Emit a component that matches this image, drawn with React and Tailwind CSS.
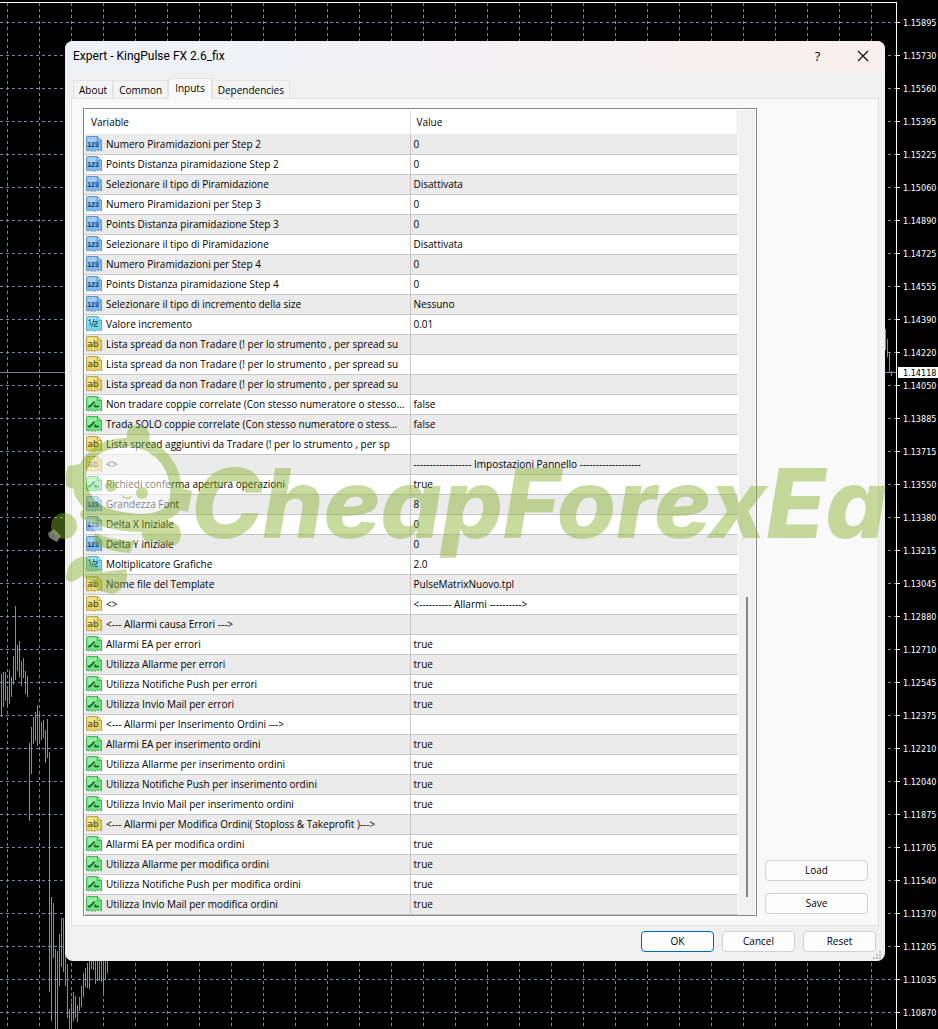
import React, { useState } from 'react';

const prices = [
  '1.15895', '1.15730', '1.15560', '1.15395', '1.15225', '1.15060', '1.14890', '1.14725',
  '1.14555', '1.14390', '1.14220', '1.14050', '1.13885', '1.13715', '1.13550', '1.13380',
  '1.13215', '1.13045', '1.12880', '1.12710', '1.12545', '1.12375', '1.12210', '1.12040',
  '1.11875', '1.11705', '1.11540', '1.11370', '1.11205', '1.11035', '1.10870',
];

// x, high, low
const bars = [
  [1, 674, 717], [3, 672, 707], [5, 672, 701], [7, 686, 706], [9, 670, 704], [11, 677, 697],
  [13, 656, 685], [15, 606, 680], [17, 645, 671], [19, 641, 677], [21, 661, 686], [23, 658, 678],
  [25, 671, 694], [27, 676, 697], [29, 743, 821], [31, 727, 774], [33, 717, 744], [35, 712, 741],
  [37, 705, 746], [39, 714, 742], [41, 722, 740], [43, 720, 738], [45, 730, 763], [47, 719, 758],
  [49, 752, 992], [51, 897, 1021], [53, 903, 958], [55, 949, 1029], [57, 951, 1029], [59, 934, 986],
  [61, 918, 967], [63, 918, 972], [65, 940, 986], [67, 964, 1018], [69, 1009, 1029], [71, 1003, 1029],
  [73, 992, 1021], [75, 996, 1018], [77, 1005, 1022], [79, 997, 1011], [81, 986, 1007], [83, 973, 997],
  [85, 968, 987], [87, 963, 988], [89, 955, 989], [91, 950, 969], [93, 950, 970], [95, 950, 984],
  [97, 950, 981], [99, 950, 981], [101, 950, 982], [103, 950, 993], [105, 950, 980], [107, 950, 973],
  [885, 329, 350], [887, 339, 357], [889, 352, 372], [891, 371, 376],
];

const rows = [
  ['int', 'Numero Piramidazioni per Step 2', '0'],
  ['int', 'Points Distanza piramidazione Step 2', '0'],
  ['int', 'Selezionare il tipo di Piramidazione', 'Disattivata'],
  ['int', 'Numero Piramidazioni per Step 3', '0'],
  ['int', 'Points Distanza piramidazione Step 3', '0'],
  ['int', 'Selezionare il tipo di Piramidazione', 'Disattivata'],
  ['int', 'Numero Piramidazioni per Step 4', '0'],
  ['int', 'Points Distanza piramidazione Step 4', '0'],
  ['int', 'Selezionare il tipo di incremento della size', 'Nessuno'],
  ['double', 'Valore incremento', '0.01'],
  ['string', 'Lista spread da non Tradare (! per lo strumento , per spread su', ''],
  ['string', 'Lista spread da non Tradare (! per lo strumento , per spread su', ''],
  ['string', 'Lista spread da non Tradare (! per lo strumento , per spread su', ''],
  ['bool', 'Non tradare coppie correlate (Con stesso numeratore o stesso...', 'false'],
  ['bool', 'Trada SOLO coppie correlate (Con stesso numeratore o stess...', 'false'],
  ['string', 'Lista spread aggiuntivi da Tradare (! per lo strumento , per sp', ''],
  ['string', '<>', '------------------ Impostazioni Pannello -------------------'],
  ['bool', 'Richiedi conferma apertura operazioni', 'true'],
  ['int', 'Grandezza Font', '8'],
  ['int', 'Delta X Iniziale', '0'],
  ['int', 'Delta Y Iniziale', '0'],
  ['double', 'Moltiplicatore Grafiche', '2.0'],
  ['string', 'Nome file del Template', 'PulseMatrixNuovo.tpl'],
  ['string', '<>', '<---------- Allarmi ---------->'],
  ['string', '<--- Allarmi causa Errori --->', ''],
  ['bool', 'Allarmi EA per errori', 'true'],
  ['bool', 'Utilizza Allarme per errori', 'true'],
  ['bool', 'Utilizza Notifiche Push per errori', 'true'],
  ['bool', 'Utilizza Invio Mail per errori', 'true'],
  ['string', '<--- Allarmi per Inserimento Ordini --->', ''],
  ['bool', 'Allarmi EA per inserimento ordini', 'true'],
  ['bool', 'Utilizza Allarme per inserimento ordini', 'true'],
  ['bool', 'Utilizza Notifiche Push per inserimento ordini', 'true'],
  ['bool', 'Utilizza Invio Mail per inserimento ordini', 'true'],
  ['string', '<--- Allarmi per Modifica Ordini( Stoploss & Takeprofit )--->', ''],
  ['bool', 'Allarmi EA per modifica ordini', 'true'],
  ['bool', 'Utilizza Allarme per modifica ordini', 'true'],
  ['bool', 'Utilizza Notifiche Push per modifica ordini', 'true'],
  ['bool', 'Utilizza Invio Mail per modifica ordini', 'true'],
];

const iconColors = {
  int: { fill: '#84b9ea', light: '#b5d8f6', edge: '#5f97cc', ink: '#123a63' },
  double: { fill: '#7ed5e8', light: '#b4ecf5', edge: '#5bb3c9', ink: '#14566b' },
  string: { fill: '#e6d469', light: '#f4eaa2', edge: '#b8a64a', ink: '#4d410a' },
  bool: { fill: '#6fe183', light: '#a9f2b2', edge: '#45b35b', ink: '#0d5220' },
};

const TypeIcon = ({ type }) => {
  const c = iconColors[type];
  return (
    <svg viewBox="0 0 16 16" className="w-4 h-4 shrink-0" aria-hidden="true">
      <path
        d="M0.5 1.5 Q0.5 0.5 1.5 0.5 H11.5 L15.5 4.5 V15 L13.5 13.5 L12 15 L10.5 13.5 L9 15.5 L7.5 14 L6 15.5 L4.5 13.5 L3 15 L0.5 14.5 Z"
        fill={c.fill}
        stroke={c.edge}
      />
      <path d="M1.5 1.5 H11 L9 6 L1.5 9 Z" fill={c.light} opacity="0.7" />
      <path d="M11.5 0.5 V4.5 H15.5 Z" fill={c.light} stroke={c.edge} />
      {type === 'bool' && <path d="M2 10.5 H4 L8.5 5.5 M9 8.5 V10.5 H13" fill="none" stroke={c.ink} strokeWidth="1.4" />}
      {type === 'double' && (
        <>
          <path d="M2.5 4.5 L4 3.5 V9 M8 3 L5.5 11" fill="none" stroke={c.ink} />
          <path d="M8 5.5 H11 V8 H8.5 V10.5 H12" fill="none" stroke={c.ink} />
        </>
      )}
      {type === 'int' && (
        <text x="7" y="11" textAnchor="middle" fill={c.ink} className="text-[7px] font-bold font-['Liberation_Sans']">123</text>
      )}
      {type === 'string' && (
        <text x="7" y="11" textAnchor="middle" fill={c.ink} className="text-[9px] font-['DejaVu_Sans']">ab</text>
      )}
    </svg>
  );
};

const ChartBackground = () => (
  <svg className="absolute inset-0 w-full h-full" shapeRendering="crispEdges" aria-hidden="true">
    <g transform="translate(0 -3)">
      <g stroke="#778899" strokeDasharray="3 3">
        {Array.from({ length: 28 }, (_, i) => (
          <line key={i} x1={7.5 + i * 32} x2={7.5 + i * 32} y1="3" y2="1100" />
        ))}
        {prices.map((p, i) => (
          <line key={p} x1="0" x2="100%" y1={22.5 + i * 33} y2={22.5 + i * 33} />
        ))}
      </g>
      <line x1="0" x2="100%" y1="372.5" y2="372.5" stroke="#778899" />
      <g stroke="#00f000">
        {bars.map(([x, high, low]) => (
          <line key={x} x1={x + 0.5} x2={x + 0.5} y1={high} y2={low} />
        ))}
      </g>
    </g>
  </svg>
);

const Watermark = () => (
  <svg
    viewBox="48 420 838 185"
    width="838"
    height="185"
    className="absolute left-[48px] top-[417px] z-20 pointer-events-none"
    aria-hidden="true"
  >
    <path d="M86 478 C86 458 104 447 128 447 C156 448 172 470 170 496 C168 512 150 516 130 513 C104 510 88 502 86 478 Z" fill="#fff" opacity="0.5" />
    <path d="M84 518 L146 533 L142 545 L96 532 Z M76 582 L84 592 L72 582 Z" fill="#fff" opacity="0.4" />
    <path d="M48 533 L54 529 L61 536 L57 542 L53 540 L49 537 Z" fill="#fff" opacity="0.45" />
    <g opacity="0.45" fill="#85b12c" stroke="none">
      <path d="M127 438 C124 421 148 421 150 436 L149 441 C168 448 180 466 182 488 L192 491 L188 512 L180 510 C176 517 170 518 165 521 C178 520 183 530 180 540 C176 550 160 546 155 540 C148 546 140 538 142 532 C118 532 98 526 82 519 C79 514 80 511 84 509 C77 500 73 494 74 489 L67 487 C64 480 66 472 68 466 L80 464 C88 448 104 438 127 438 Z M86 478 C88 502 104 510 130 513 C150 516 168 512 170 496 C172 470 156 448 128 447 C104 447 86 458 86 478 Z" fillRule="evenodd" />
      <circle cx="111" cy="486" r="6" />
      <circle cx="142" cy="493" r="6" />
      <path d="M120 494 Q125 499 132 496 L131 498 Q124 501 120 494 Z" />
      <circle cx="64" cy="526" r="13" />
      <path d="M95 533 Q112 541 135 541 L130 553 Q110 552 93 543 Z" />
      <path d="M66 577 C68 562 76 556 86 557 L94 564 L103 572 L126 569 C130 580 122 592 112 594 L98 590 C96 584 88 580 82 576 L74 581 Q66 583 66 577 Z" />
      <text x="191" y="538" className="text-[96px] font-extrabold italic font-['Inter',sans-serif] [font-feature-settings:'cv11']">
        CheapForexEa
      </text>
    </g>
  </svg>
);

const tabs = ['About', 'Common', 'Inputs', 'Dependencies'];

const DialogButton = ({ children, primary, className = '' }) => (
  <button
    type="button"
    className={`h-[21px] flex items-center justify-center bg-[#fdfdfd] border rounded ${primary ? 'border-[#0067c0]' : 'border-[#d0d0d0]'} ${className}`}
  >
    {children}
  </button>
);

const ExpertDialog = () => {
  const [activeTab, setActiveTab] = useState('Inputs');

  return (
    <div role="dialog" aria-labelledby="dialog-title" className="relative z-10 bg-[#f0f0f0] rounded-lg overflow-hidden pb-[9px]">
      <div className="h-[30px] flex items-center pl-2 bg-linear-to-r from-[#edf2f9] to-[#f9efee]">
        <h1 id="dialog-title" className="flex-1 text-[12px] font-['Roboto',sans-serif]">Expert - KingPulse FX 2.6_fix</h1>
        <button type="button" aria-label="Help" className="w-[45px] text-[13px]">?</button>
        <button type="button" aria-label="Close" className="w-[45px] flex justify-center">
          <svg viewBox="0 0 12 12" className="w-3 h-3" stroke="#111" strokeWidth="1.2"><path d="M1 1 L11 11 M11 1 L1 11" /></svg>
        </button>
      </div>

      {/* Tabs */}
      <div role="tablist" className="flex items-end h-[27px] pl-2">
        {tabs.map((tab) => (
          <button
            key={tab}
            type="button"
            role="tab"
            aria-selected={activeTab === tab}
            onClick={() => setActiveTab(tab)}
            className={`border border-b-0 border-[#e3e3e3] ${
              activeTab === tab ? 'relative z-10 h-[21px] px-1.5 pb-[3px] -mb-px bg-[#f9f9f9]' : 'h-[18px] px-[5px] bg-[#f3f3f3]'
            }`}
          >
            {tab}
          </button>
        ))}
      </div>

      <div role="tabpanel" className="mx-1.5 flex items-stretch bg-[#f9f9f9] border border-[#e3e3e3] py-[9px] pl-[11px] pr-2.5">
        <div className="flex-1 flex bg-white border border-[#828790] px-px pt-px">
          <table className="flex-1 table-fixed border-collapse text-left w-full">
            <colgroup>
              <col className="w-[325px]" />
              <col />
            </colgroup>
            <thead>
              <tr className="h-6">
                <th className="font-normal pl-1.5 border-r border-[#e0e0e0]">Variable</th>
                <th className="font-normal pl-1.5 border-r border-[#e0e0e0]">Value</th>
              </tr>
            </thead>
            <tbody>
              {rows.map(([type, name, value], i) => (
                <tr key={i} className="h-5 odd:bg-[#ebebeb] border-b border-[#c8c8c8]">
                  <td className="p-0 border-r border-[#c8c8c8]">
                    <div className="flex items-center pl-px gap-1 whitespace-nowrap">
                      <TypeIcon type={type} />
                      {name}
                    </div>
                  </td>
                  <td className="py-0 pl-[3px] whitespace-nowrap">{value}</td>
                </tr>
              ))}
            </tbody>
          </table>
          <div className="w-4 ml-px bg-[#f0f0f0] flex flex-col items-center justify-end pb-[18px]">
            <div className="w-0.5 h-[300px] bg-[#868686]" />
          </div>
        </div>
        <div className="w-[103px] ml-2 flex flex-col justify-end gap-3 pb-0.5">
          <DialogButton>Load</DialogButton>
          <DialogButton>Save</DialogButton>
        </div>
      </div>

      <div className="flex justify-end gap-2 pt-[5px] pr-[9px]">
        <DialogButton primary className="w-[73px]">OK</DialogButton>
        <DialogButton className="w-[73px]">Cancel</DialogButton>
        <DialogButton className="w-[73px]">Reset</DialogButton>
      </div>
      <svg viewBox="0 0 8 8" className="absolute right-1 bottom-0.5 w-2 h-2" fill="#bdbdbd" aria-hidden="true">
        <path d="M6 0h2v2h-2zM3 3h2v2h-2zM6 3h2v2h-2zM0 6h2v2h-2zM3 6h2v2h-2zM6 6h2v2h-2z" />
      </svg>
    </div>
  );
};

export default function App() {
  return (
    <div className="min-h-screen flex bg-black text-black text-[10px] leading-4 font-['Open_Sans',sans-serif] overflow-hidden">
      <main className="relative flex-1 mt-0.5 pl-[65px] pr-[11px] pt-[38px] border-t border-r border-white">
        <ChartBackground />
        <ExpertDialog />
        <Watermark />
      </main>
      <aside className="relative w-[41px] pt-1.5 text-white text-[9px] font-['DejaVu_Sans_Condensed','DejaVu_Sans',sans-serif]">
        <ul>
          {prices.map((p) => (
            <li key={p} className="h-[33px] flex items-center gap-[3px]">
              <span className="w-[3px] h-px bg-white" />
              {p}
            </li>
          ))}
        </ul>
        <div className="absolute left-px right-0 top-[367px] h-[11px] pl-[5px] flex items-center bg-white text-black">1.14118</div>
      </aside>
    </div>
  );
}
